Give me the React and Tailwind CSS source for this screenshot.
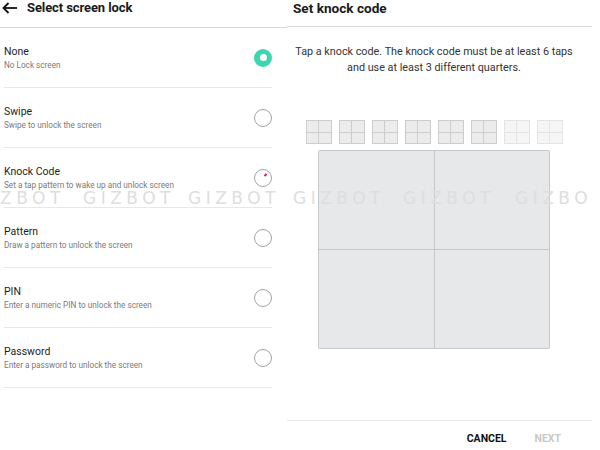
import React from "react";

const rows = [
  { t: "None", s: "No Lock screen", sel: true },
  { t: "Swipe", s: "Swipe to unlock the screen" },
  { t: "Knock Code", s: "Set a tap pattern to wake up and unlock screen", mark: true },
  { t: "Pattern", s: "Draw a pattern to unlock the screen" },
  { t: "PIN", s: "Enter a numeric PIN to unlock the screen" },
  { t: "Password", s: "Enter a password to unlock the screen" },
];

const marks = [
  { w: "ZBOT", c: "w-[83px]" },
  { w: "GIZBOT", c: "w-[105px]" },
  { w: "GIZBOT", c: "w-[105px]" },
  { w: "GIZBOT", c: "w-[110px]" },
  { w: "GIZBOT", c: "w-[112px]" },
  { w: "GIZBO", c: "w-[80px]" },
];

function Radio({ sel, mark }) {
  if (sel) {
    return (
      <div className="w-[18px] h-[18px] rounded-full bg-[#3dd6b0] flex items-center justify-center shrink-0">
        <div className="w-[7px] h-[7px] rounded-full bg-white" />
      </div>
    );
  }
  return (
    <div className="relative w-[18px] h-[18px] rounded-full border-[1.5px] border-[#a3a3a3] shrink-0">
      {mark && <div className="absolute left-[9px] top-[4px] w-[3px] h-[2px] bg-[#e0204a] -rotate-45" />}
    </div>
  );
}

function Mini({ light }) {
  return (
    <div className={`w-[26px] h-[24px] p-px gap-px grid grid-cols-2 grid-rows-2 ${light ? "bg-[#e4e4e4]" : "bg-[#cdcdcd]"}`}>
      {[0, 1, 2, 3].map((i) => (
        <div key={i} className={light ? "bg-[#f5f5f5]" : "bg-[#ececec]"} />
      ))}
    </div>
  );
}

export default function App() {
  return (
    <div className="relative w-[600px] h-[450px] bg-white overflow-hidden flex" style={{ fontFamily: "Roboto, 'Liberation Sans', sans-serif" }}>
      {/* Left panel */}
      <div className="w-[287px] shrink-0 flex flex-col">
        <div className="h-[28px] border-b border-[#d8d8d8] flex items-start">
          <div className="h-[16px] flex items-center gap-[7px]">
            <svg width="20" height="16" viewBox="0 0 20 16" fill="none" stroke="#111" strokeWidth="1.8" strokeLinecap="butt">
              <path d="M17 8H3.5" />
              <path d="M8.5 3L3.5 8L8.5 13" />
            </svg>
            <span className="text-[13px] leading-[16px] font-bold text-[#1a1a1a] tracking-[-0.1px]">Select screen lock</span>
          </div>
        </div>
        <div className="ml-[4px] w-[268px] flex flex-col">
          {rows.map((r) => (
            <div key={r.t} className="h-[60px] border-b border-[#e8e8e8] flex items-center justify-between">
              <div className="flex flex-col">
                <span className="text-[10.5px] leading-[14px] text-[#1e1e1e]">{r.t}</span>
                <span className="text-[8.2px] leading-[12px] text-[#7a7a7a]">{r.s}</span>
              </div>
              <Radio sel={r.sel} mark={r.mark} />
            </div>
          ))}
        </div>
      </div>

      {/* Right panel */}
      <div className="w-[305px] shrink-0 flex flex-col">
        <div className="h-[27px] border-b border-[#d8d8d8] flex items-start pl-[6px]">
          <span className="text-[13.6px] leading-[16px] font-bold text-[#1a1a1a]">Set knock code</span>
        </div>
        <div className="w-[294px] flex flex-col items-center">
          <p className="mt-[17px] text-[10.8px] leading-[16px] text-[#333] text-center whitespace-nowrap">
            Tap a knock code. The knock code must be at least 6 taps
            <br />
            and use at least 3 different quarters.
          </p>
          <div className="mt-[44px] flex gap-[7px]">
            <Mini />
            <Mini />
            <Mini />
            <Mini />
            <Mini />
            <Mini />
            <Mini light />
            <Mini light />
          </div>
          <div className="mt-[6px] w-[232px] h-[199px] rounded-[2px] bg-[#c6c9ca] p-px gap-px grid grid-cols-2 grid-rows-2">
            <div className="bg-[#e6e8e9]" />
            <div className="bg-[#e6e8e9]" />
            <div className="bg-[#e6e8e9]" />
            <div className="bg-[#e6e8e9]" />
          </div>
        </div>
        <div className="mt-[71px] border-t border-[#e6e6e6] flex justify-end pr-[31px] pt-[11px] gap-[28px]">
          <span className="text-[10.5px] leading-[14px] font-bold text-[#111]">CANCEL</span>
          <span className="text-[10.5px] leading-[14px] font-bold text-[#c8c8c8]">NEXT</span>
        </div>
      </div>

      {/* Watermark */}
      <div className="absolute left-0 top-[191px] flex pointer-events-none" style={{ fontFamily: "'DejaVu Sans', sans-serif" }}>
        {marks.map((m, i) => (
          <span key={i} className={`${m.c} shrink-0 text-[17px] leading-[14px] tracking-[4.5px] text-[#dedede] whitespace-nowrap`}>{m.w}</span>
        ))}
      </div>
    </div>
  );
}
